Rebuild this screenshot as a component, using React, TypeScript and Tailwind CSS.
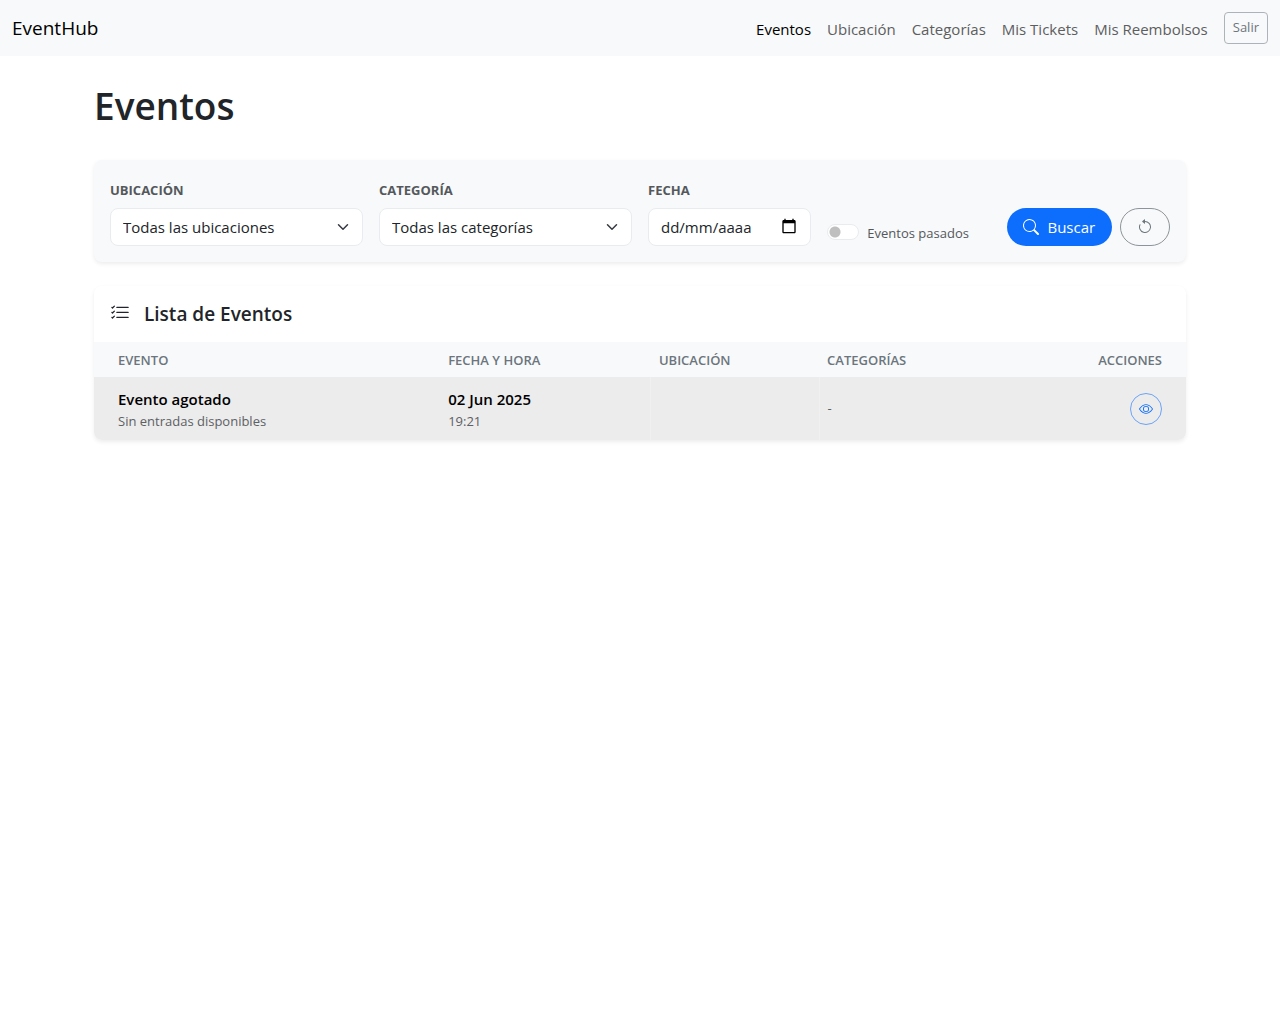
import React from "react";
import {
  BsArrowCounterclockwise,
  BsEye,
  BsListCheck,
  BsSearch,
} from "react-icons/bs";

const navLinks = [
  { label: "Eventos", active: true },
  { label: "Ubicación", active: false },
  { label: "Categorías", active: false },
  { label: "Mis Tickets", active: false },
  { label: "Mis Reembolsos", active: false },
];

const events = [
  {
    title: "Evento agotado",
    note: "Sin entradas disponibles",
    date: "02 Jun 2025",
    time: "19:21",
    location: "",
    categories: "-",
  },
];

function Navbar() {
  return (
    <nav className="flex min-h-14 flex-wrap items-center justify-between bg-[#f8f9fa] px-3">
      <a href="#" className="text-[19px] leading-7 text-black">
        EventHub
      </a>
      <div className="flex flex-wrap items-center gap-4">
        {navLinks.map((link) => (
          <a
            key={link.label}
            href="#"
            className={link.active ? "pt-0.5 text-[15px] text-black" : "pt-0.5 text-[15px] text-[#5d5e5f]"}
          >
            {link.label}
          </a>
        ))}
        <button
          type="button"
          className="h-8 rounded border border-[#adb3b9] px-2 text-[13px] text-[#6c757d]"
        >
          Salir
        </button>
      </div>
    </nav>
  );
}

function FilterSelect({ id, label, option }: { id: string; label: string; option: string }) {
  return (
    <div className="col-span-3 flex flex-col gap-2">
      <label htmlFor={id} className="text-[13px] leading-5 font-bold text-[#54585c] uppercase">
        {label}
      </label>
      <div className="relative">
        <select
          id={id}
          className="h-[38px] w-full appearance-none rounded-lg border border-[#e9ecef] bg-white pr-9 pl-3 text-[15px] text-[#212529]"
        >
          <option>{option}</option>
        </select>
        <svg
          viewBox="0 0 16 16"
          className="pointer-events-none absolute top-[13px] right-3 h-3 w-4"
          fill="none"
          stroke="#343a40"
          strokeLinecap="round"
          strokeLinejoin="round"
          strokeWidth="2"
        >
          <path d="m2 5 6 6 6-6" />
        </svg>
      </div>
    </div>
  );
}

function Filters() {
  return (
    <form className="grid grid-cols-12 items-end gap-x-4 rounded-lg bg-[#f8f9fa] px-4 pt-5 pb-4 shadow-[0_2px_4px_rgba(0,0,0,0.075)]">
      <FilterSelect id="ubicacion" label="Ubicación" option="Todas las ubicaciones" />
      <FilterSelect id="categoria" label="Categoría" option="Todas las categorías" />
      <div className="col-span-2 flex flex-col gap-2">
        <label htmlFor="fecha" className="text-[13px] leading-5 font-bold text-[#54585c] uppercase">
          Fecha
        </label>
        <div className="relative">
          <input
            id="fecha"
            type="text"
            placeholder="dd/mm/aaaa"
            className="h-[38px] w-full rounded-lg border border-[#e9ecef] bg-white pr-9 pl-3 text-[15px] text-[#212529] placeholder:text-[#212529]"
          />
          <button type="button" aria-label="Abrir calendario" className="absolute top-[10px] right-[14px]">
            <svg viewBox="0 0 24 24" className="size-4" fill="#000">
              <path d="M20 3h-1V1h-2v2H7V1H5v2H4c-1.1 0-2 .9-2 2v16c0 1.1.9 2 2 2h16c1.1 0 2-.9 2-2V5c0-1.1-.9-2-2-2zm0 18H4V8h16v13z" />
            </svg>
          </button>
        </div>
      </div>
      <div className="col-span-2 flex h-[38px] items-end gap-2 pb-[3px]">
        <input
          id="pasados"
          type="checkbox"
          role="switch"
          className="mb-[3px] h-4 w-8 shrink-0 appearance-none rounded-full border border-[#e9ecef] bg-white bg-[radial-gradient(circle_at_7px_7px,#bfbfbf_5px,transparent_6px)] checked:bg-[radial-gradient(circle_at_23px_7px,#0d6efd_5px,transparent_6px)]"
        />
        <label htmlFor="pasados" className="text-[13px] leading-5 whitespace-nowrap text-[#54585c]">
          Eventos pasados
        </label>
      </div>
      <div className="col-span-2 flex gap-2">
        <button
          type="submit"
          className="flex h-[38px] flex-1 items-center justify-center gap-2 rounded-full bg-[#0d6efd] text-[15px] text-white"
        >
          <BsSearch className="size-4" />
          Buscar
        </button>
        <button
          type="button"
          aria-label="Restablecer filtros"
          className="flex h-[38px] w-[50px] items-center justify-center rounded-full border border-[#8d949a] text-[#6c757d]"
        >
          <BsArrowCounterclockwise className="size-4" />
        </button>
      </div>
    </form>
  );
}

function EventList() {
  return (
    <section className="mt-6 overflow-hidden rounded-lg bg-white shadow-[0_2px_4px_rgba(0,0,0,0.075)]">
      <h2 className="flex items-start gap-[14px] px-4 py-[14px] text-[19px] leading-7 font-semibold text-[#212529]">
        <BsListCheck className="mt-[3px] size-5" />
        Lista de Eventos
      </h2>
      <table className="w-full table-fixed border-collapse text-left">
        <thead className="bg-[#f8f9fa] text-[13px] leading-4 text-[#6c757d] uppercase">
          <tr className="h-[35px]">
            <th className="w-[31.7%] pr-2 pl-6 font-semibold">Evento</th>
            <th className="w-[19.3%] px-2 font-semibold">Fecha y hora</th>
            <th className="w-[15.4%] px-2 font-semibold">Ubicación</th>
            <th className="px-2 font-semibold">Categorías</th>
            <th className="pr-6 pl-2 text-right font-semibold">Acciones</th>
          </tr>
        </thead>
        <tbody>
          {events.map((event) => (
            <tr key={event.title} className="h-[63px] bg-[#ececec] text-[#5d6064]">
              <td className="pr-2 pl-6">
                <div className="text-[15px] leading-6 font-semibold text-black">{event.title}</div>
                <div className="text-[13px] leading-5">{event.note}</div>
              </td>
              <td className="px-2">
                <div className="text-[15px] leading-6 font-semibold text-black">{event.date}</div>
                <div className="text-[13px] leading-5">{event.time}</div>
              </td>
              <td className="border-l border-[#f0f0f0] px-2">{event.location}</td>
              <td className="border-l border-[#f0f0f0] px-2 text-[13px]">{event.categories}</td>
              <td className="pr-6 pl-2">
                <button
                  type="button"
                  aria-label="Ver evento"
                  className="ml-auto flex size-8 items-center justify-center rounded-full border border-[#6ba3f7] text-[#0d6efd]"
                >
                  <BsEye className="size-[14px]" />
                </button>
              </td>
            </tr>
          ))}
        </tbody>
      </table>
    </section>
  );
}

export default function App() {
  return (
    <div className="min-h-screen bg-white font-['Open_Sans',sans-serif]">
      <Navbar />
      <main className="mx-auto max-w-[1140px] px-6 pt-6">
        <h1 className="mb-7 text-[37px] leading-[52px] font-semibold text-[#212529]">Eventos</h1>
        <Filters />
        <EventList />
      </main>
    </div>
  );
}
